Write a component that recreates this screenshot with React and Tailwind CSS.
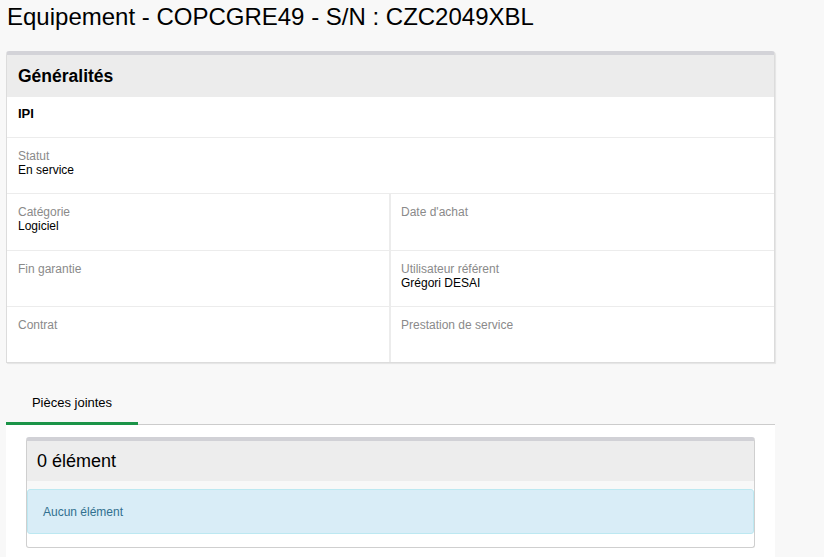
export default function App() {
  const font = { fontFamily: '"Liberation Sans", Arial, sans-serif' };
  const Cell = ({ label, value, right, tall }) => (
    <div className={`${tall ? "h-[56px]" : "h-[55px]"} pt-[11px] ${right ? "flex-1 border-l-2 border-[#ececec] pl-[10px]" : "w-[382px] pl-[11px]"}`}>
      <div className="text-[12px] leading-[14px] text-[#8a8a8a]">{label}</div>
      {value && <div className="text-[12px] leading-[14px] text-black">{value}</div>}
    </div>
  );
  return (
    <div className="h-[557px] w-[824px] bg-[#f8f8f8] overflow-hidden" style={font}>
      <div className="pl-[6px] w-[775px]">
        <h1 className="pt-[3px] pl-[1px] text-[24px] leading-[28px] text-black font-normal">
          Equipement - COPCGRE49 - S/N : CZC2049XBL
        </h1>
        <div className="mt-[20px] border border-[#dcdcdc] border-t-4 border-t-[#d3d3d8] rounded-t-[3px] bg-white shadow-[1px_1px_1px_rgba(0,0,0,0.08)]">
          <div className="h-[42px] bg-[#ececec] flex items-center px-[11px]">
            <span className="text-[17.5px] font-bold text-black">Généralités</span>
          </div>
          <div className="h-[41px] px-[11px] pt-[4px] border-b border-[#ececec]">
            <span className="text-[13px] font-bold text-black">IPI</span>
          </div>
          <div className="border-b border-[#ececec] flex">
            <Cell label="Statut" value="En service" />
          </div>
          <div className="flex border-b border-[#ececec]">
            <Cell label="Catégorie" value="Logiciel" tall />
            <Cell label="Date d'achat" right tall />
          </div>
          <div className="flex border-b border-[#ececec]">
            <Cell label="Fin garantie" />
            <Cell label="Utilisateur référent" value="Grégori DESAI" right />
          </div>
          <div className="flex">
            <Cell label="Contrat" />
            <Cell label="Prestation de service" right />
          </div>
        </div>
        <div className="mt-[20px] border-b border-[#cccccc] flex">
          <div className="w-[132px] h-[42px] -mb-[1px] flex items-center justify-center border-b-[3px] border-[#1b9448]">
            <span className="text-[13px] leading-[15px] text-black">Pièces jointes</span>
          </div>
        </div>
        <div className="bg-white pt-[12px] px-[20px] h-[200px]">
          <div className="border border-[#cfcfcf] border-t-4 border-t-[#d1d1d6] rounded-[3px] bg-white">
            <div className="h-[40px] bg-[#ededed] flex items-center px-[10px]">
              <span className="text-[18px] text-black">0 élément</span>
            </div>
            <div className="bg-[#f8f8f8] h-[8px]" />
            <div className="h-[45px] bg-[#d9edf7] border border-[#bce8f1] rounded-[3px] flex items-center px-[15px]">
              <span className="text-[12px] text-[#31708f]">Aucun élément</span>
            </div>
            <div className="h-[13px]" />
          </div>
        </div>
      </div>
    </div>
  );
}
